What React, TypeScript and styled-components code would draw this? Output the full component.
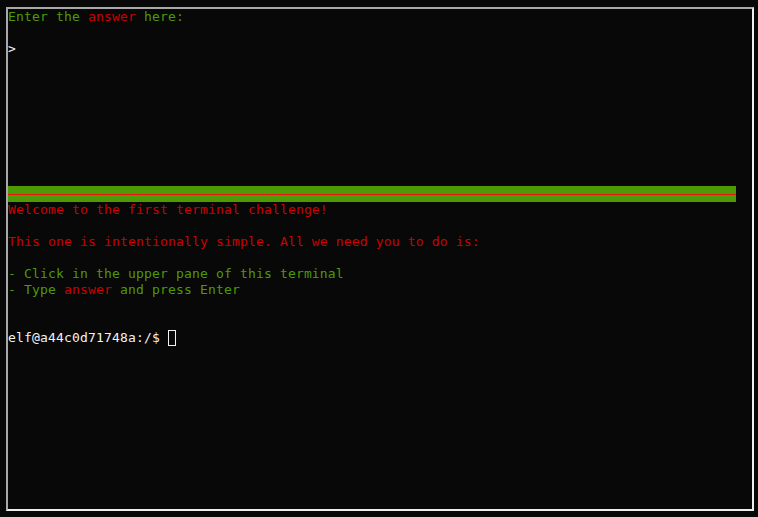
import React from "react";
import styled, { createGlobalStyle } from "styled-components";

const Global = createGlobalStyle`
  html, body {
    margin: 0;
    padding: 0;
    background: #080808;
  }
  #root {
    padding: 7px 4px 6px 6px;
  }
`;

const Frame = styled.div`
  box-sizing: border-box;
  width: 748px;
  height: 504px;
  border-style: solid;
  border-width: 2px;
  border-color: #a9a9a9 #eeeeee #eeeeee #a9a9a9;
  background: #080808;
  display: flex;
  flex-direction: column;
  overflow: hidden;
  font-family: "DejaVu Sans Mono", monospace;
  font-size: 13px;
  letter-spacing: 0.17px;
`;

const Pane = styled.div<{ $h?: number }>`
  display: flex;
  flex-direction: column;
  height: ${(p) => (p.$h ? `${p.$h}px` : "auto")};
  flex: ${(p) => (p.$h ? "0 0 auto" : "1 1 auto")};
`;

const Line = styled.div`
  height: 16px;
  line-height: 16px;
  white-space: pre;
  display: flex;
  align-items: center;
`;

const Txt = styled.span<{ $c: "green" | "red" | "white" }>`
  color: ${(p) =>
    p.$c === "green" ? "#4e9a06" : p.$c === "red" ? "#cc0000" : "#f2f2f2"};
`;

const Divider = styled.div`
  width: 728px;
  height: 16px;
  display: flex;
  flex-direction: column;
  flex: 0 0 auto;
`;

const BarGreen = styled.div<{ $h: number }>`
  height: ${(p) => p.$h}px;
  background: #4e9a06;
`;

const BarRed = styled.div`
  height: 1px;
  background: #e8150f;
`;

const Cursor = styled.span`
  display: inline-block;
  box-sizing: border-box;
  width: 8px;
  height: 16px;
  border: 1px solid #f2f2f2;
`;

export default function App() {
  return (
    <>
      <Global />
      <Frame>
        <Pane $h={177}>
          <Line>
            <Txt $c="green">Enter the </Txt>
            <Txt $c="red">answer</Txt>
            <Txt $c="green"> here:</Txt>
          </Line>
          <Line />
          <Line>
            <Txt $c="white">&gt;</Txt>
          </Line>
        </Pane>
        <Divider>
          <BarGreen $h={8} />
          <BarRed />
          <BarGreen $h={7} />
        </Divider>
        <Pane>
          <Line>
            <Txt $c="red">Welcome to the first terminal challenge!</Txt>
          </Line>
          <Line />
          <Line>
            <Txt $c="red">This one is intentionally simple. All we need you to do is:</Txt>
          </Line>
          <Line />
          <Line>
            <Txt $c="green">- Click in the upper pane of this terminal</Txt>
          </Line>
          <Line>
            <Txt $c="green">- Type </Txt>
            <Txt $c="red">answer</Txt>
            <Txt $c="green"> and press Enter</Txt>
          </Line>
          <Line />
          <Line />
          <Line>
            <Txt $c="white">elf@a44c0d71748a:/$ </Txt>
            <Cursor />
          </Line>
        </Pane>
      </Frame>
    </>
  );
}
